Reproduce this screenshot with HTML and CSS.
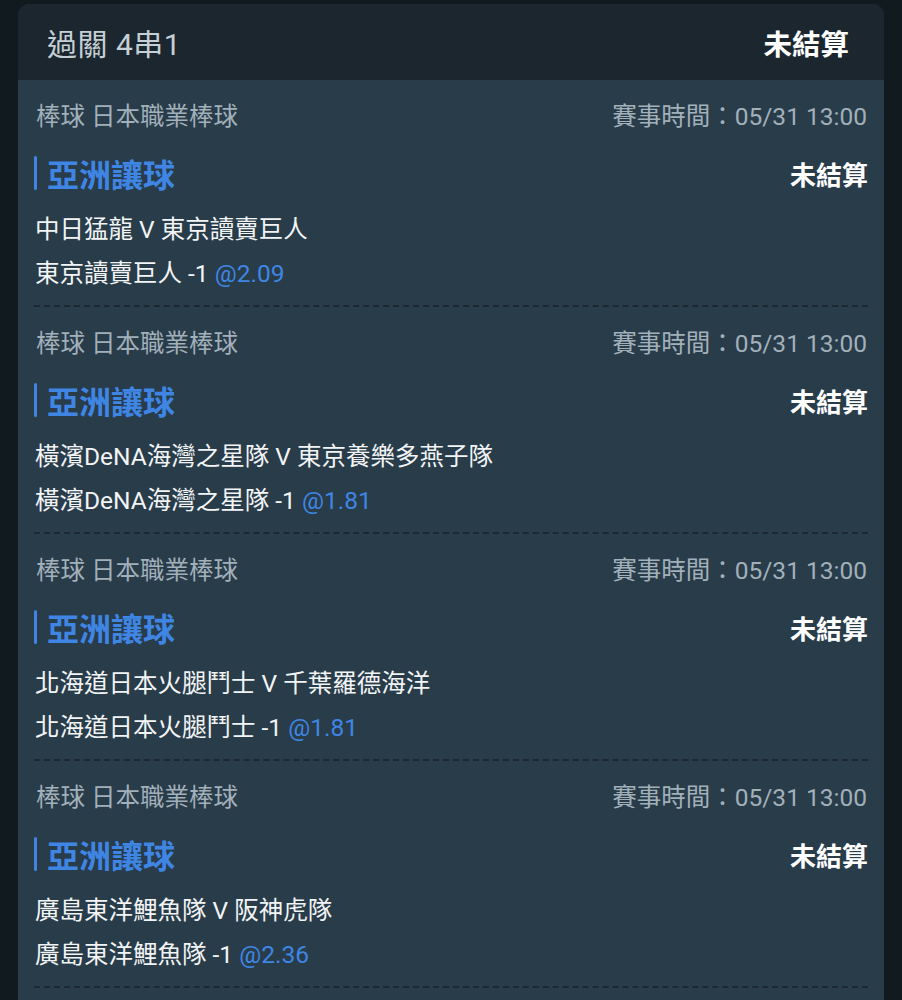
FILE: index.html
```html
<!DOCTYPE html>
<html lang="zh-Hant">
<head>
<meta charset="utf-8">
<link rel="stylesheet" href="styles.css">
</head>
<body>
<div class="card">
  <div class="card-head">
    <span class="head-title">過關 4串1</span>
    <span class="head-status">未結算</span>
  </div>

  <div class="leg">
    <div class="meta"><span>棒球 日本職業棒球</span><span>賽事時間：05/31 13:00</span></div>
    <div class="title-row"><span class="title"><i class="bar"></i>亞洲讓球</span><span class="status">未結算</span></div>
    <div class="match">中日猛龍 V 東京讀賣巨人</div>
    <div class="bet">東京讀賣巨人 -1 <span class="odds">@2.09</span></div>
  </div>

  <div class="leg">
    <div class="meta"><span>棒球 日本職業棒球</span><span>賽事時間：05/31 13:00</span></div>
    <div class="title-row"><span class="title"><i class="bar"></i>亞洲讓球</span><span class="status">未結算</span></div>
    <div class="match">橫濱DeNA海灣之星隊 V 東京養樂多燕子隊</div>
    <div class="bet">橫濱DeNA海灣之星隊 -1 <span class="odds">@1.81</span></div>
  </div>

  <div class="leg">
    <div class="meta"><span>棒球 日本職業棒球</span><span>賽事時間：05/31 13:00</span></div>
    <div class="title-row"><span class="title"><i class="bar"></i>亞洲讓球</span><span class="status">未結算</span></div>
    <div class="match">北海道日本火腿鬥士 V 千葉羅德海洋</div>
    <div class="bet">北海道日本火腿鬥士 -1 <span class="odds">@1.81</span></div>
  </div>

  <div class="leg">
    <div class="meta"><span>棒球 日本職業棒球</span><span>賽事時間：05/31 13:00</span></div>
    <div class="title-row"><span class="title"><i class="bar"></i>亞洲讓球</span><span class="status">未結算</span></div>
    <div class="match">廣島東洋鯉魚隊 V 阪神虎隊</div>
    <div class="bet">廣島東洋鯉魚隊 -1 <span class="odds">@2.36</span></div>
  </div>
</div>
</body>
</html>
```

FILE: styles.css
```css
html, body {
  margin: 0;
  padding: 0;
  background: #111a1f;
  height: 1000px;
  overflow: hidden;
}
body {
  font-family: Roboto, "Noto Sans CJK TC", sans-serif;
  color: #eef1f3;
}
.card {
  margin: 4px 18px 0 18px;
  border-radius: 12px 12px 0 0;
  background: #293c4a;
  overflow: hidden;
  padding-bottom: 40px;
}
.card-head {
  height: 76px;
  background: #1b262e;
  display: flex;
  align-items: center;
  justify-content: space-between;
  padding: 0 35px 0 29px;
}
.head-title {
  font-size: 30px;
  color: #c5cfd6;
  letter-spacing: 0.5px;
}
.head-status {
  font-size: 28.5px;
  font-weight: 700;
  color: #ffffff;
}
.leg {
  margin: 0 16px;
  padding: 14px 0 14px 0;
  border-bottom: 2px dashed #1b2831;
}
.meta {
  display: flex;
  justify-content: space-between;
  align-items: center;
  height: 40px;
  font-size: 24.5px;
  color: #a2b0ba;
  padding: 0 1px 0 2px;
}
.title-row {
  margin-top: 20px;
  height: 38px;
  display: flex;
  justify-content: space-between;
  align-items: center;
}
.title {
  display: flex;
  align-items: center;
  font-size: 32px;
  font-weight: 700;
  color: #3f86e4;
}
.bar {
  display: block;
  width: 3px;
  height: 34px;
  border-radius: 2px;
  background: #3f86e4;
  margin-right: 10px;
}
.status {
  font-size: 26px;
  font-weight: 700;
  color: #ffffff;
}
.match {
  margin-top: 21px;
  height: 34px;
  line-height: 34px;
  font-size: 24.5px;
  color: #f2f4f5;
  padding-left: 1px;
}
.bet {
  margin-top: 10px;
  height: 34px;
  line-height: 34px;
  font-size: 24.5px;
  color: #f2f4f5;
  padding-left: 1px;
}
.odds {
  color: #3f86e4;
}
```
